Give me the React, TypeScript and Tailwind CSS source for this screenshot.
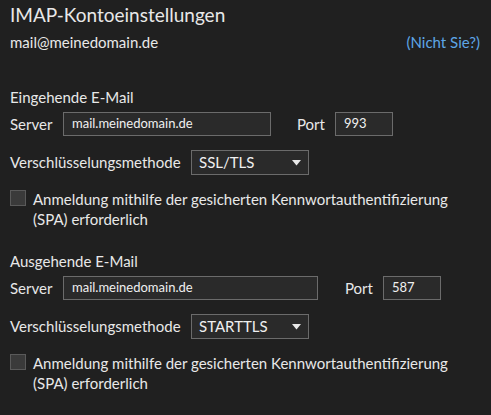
import { useState } from "react";

function TextBox({ value, width }: { value: string; width: string }) {
  return (
    <div
      className={`${width} h-[24px] flex items-center border border-[#6b6b6b] bg-[#2a2a2a] pl-[8px] text-[13px] text-[#f0f0f0]`}
    >
      {value}
    </div>
  );
}

function Dropdown({ value }: { value: string }) {
  return (
    <div className="flex h-[25px] w-[118px] items-center justify-between border border-[#6b6b6b] bg-[#2a2a2a] pl-[7px] pr-[6px] text-[15px] text-[#f0f0f0]">
      <span>{value}</span>
      <svg width="9" height="6" viewBox="0 0 9 6" className="mr-[1px]">
        <path d="M0 0h9L4.5 5.5z" fill="#e8e8e8" />
      </svg>
    </div>
  );
}

function SpaCheck() {
  const [on, setOn] = useState(false);
  return (
    <label className="mt-[14px] flex cursor-pointer items-start gap-[7px] pr-[30px] text-[15px] leading-[20px]">
      <span
        onClick={() => setOn(!on)}
        className="mt-[1px] h-[16px] w-[16px] shrink-0 border border-[#5a5a5a] bg-[#3a3a3a]"
      >
        {on && "✓"}
      </span>
      <span>Anmeldung mithilfe der gesicherten Kennwortauthentifizierung (SPA) erforderlich</span>
    </label>
  );
}

function Section({
  title,
  port,
  method,
  serverWidth,
  portGap,
  top,
}: {
  title: string;
  port: string;
  method: string;
  serverWidth: string;
  portGap: string;
  top: string;
}) {
  return (
    <div className={top}>
      <div className="text-[15px] leading-[20px]">{title}</div>
      <div className="mt-[5px] flex items-center text-[15px]">
        <span className="w-[53px]">Server</span>
        <TextBox value="mail.meinedomain.de" width={serverWidth} />
        <span className={`${portGap} w-[38px]`}>Port</span>
        <TextBox value={port} width="w-[58px]" />
      </div>
      <div className="mt-[14px] flex items-center text-[15px]">
        <span className="w-[181px]">Verschlüsselungsmethode</span>
        <Dropdown value={method} />
      </div>
      <SpaCheck />
    </div>
  );
}

export default function App() {
  return (
    <div className="h-[415px] w-[491px] overflow-hidden bg-[#202020] pl-[10px] pt-[2px] font-['Lato',sans-serif] text-[#e8e8e8]">
      <div className="text-[19px] leading-[26px]">IMAP-Kontoeinstellungen</div>
      <div className="mt-[4px] flex items-center justify-between pr-[11px] text-[15px] leading-[20px]">
        <span>mail@meinedomain.de</span>
        <a className="text-[#5ea6e6]">(Nicht Sie?)</a>
      </div>
      <Section
        title="Eingehende E-Mail"
        port="993"
        method="SSL/TLS"
        serverWidth="w-[208px]"
        portGap="ml-[26px]"
        top="mt-[35px]"
      />
      <Section
        title="Ausgehende E-Mail"
        port="587"
        method="STARTTLS"
        serverWidth="w-[255px]"
        portGap="ml-[27px]"
        top="mt-[22px]"
      />
    </div>
  );
}
